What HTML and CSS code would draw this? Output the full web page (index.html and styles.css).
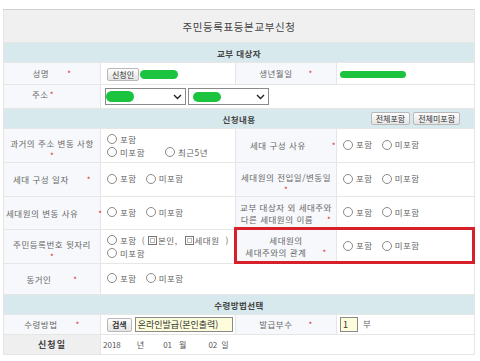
FILE: index.html
```html
<!DOCTYPE html>
<html lang="ko">
<head>
    <meta charset="UTF-8">
    <meta name="viewport" content="width=device-width, initial-scale=1.0">
    <title>주민등록표등본교부신청</title>
    <link rel="stylesheet" href="styles.css">
</head>
<body>
<table class="form">
    <colgroup>
        <col class="c-l1"><col class="c-v1"><col class="c-l2"><col class="c-v2">
    </colgroup>

    <tr class="r-title"><th colspan="4" class="title">주민등록표등본교부신청</th></tr>

    <tr class="r-sec"><th colspan="4" class="sec">교부 대상자</th></tr>
    <tr class="r-name">
        <th class="lbl">성명<span class="req g18">*</span></th>
        <td class="val"><button class="btn">신청인</button><span class="mask mask-name"></span></td>
        <th class="lbl">생년월일<span class="req g16">*</span></th>
        <td class="val"><span class="mask mask-birth"></span></td>
    </tr>
    <tr class="r-addr">
        <th class="lbl lbl-top">주소<span class="req g1">*</span></th>
        <td colspan="3" class="val">
            <div class="sel-row">
                <div class="sel"><span class="mask mask-sel"></span><svg class="chev" width="9" height="6" viewBox="0 0 9 6"><path d="M1 1l3.5 3.5L8 1" fill="none" stroke="#222" stroke-width="1.4"/></svg></div>
                <div class="sel"><span class="mask mask-sel2"></span><svg class="chev" width="9" height="6" viewBox="0 0 9 6"><path d="M1 1l3.5 3.5L8 1" fill="none" stroke="#222" stroke-width="1.4"/></svg></div>
            </div>
        </td>
    </tr>

    <tr class="r-sec">
        <th colspan="4" class="sec">
            <div class="sec-bar">
                <span></span>
                <span>신청내용</span>
                <span class="sec-btns"><button class="btn">전체포함</button><button class="btn">전체미포함</button></span>
            </div>
        </th>
    </tr>
    <tr class="r-a">
        <th class="lbl lbl-2">과거의 주소 변동 사항<br><span class="req">*</span></th>
        <td class="val">
            <div class="line"><span class="opt"><span class="rd"></span>포함</span></div>
            <div class="line"><span class="opt"><span class="rd"></span>미포함</span><span class="opt wide"><span class="rd"></span>최근5년</span></div>
        </td>
        <th class="lbl lbl-shift">세대 구성 사유<span class="req g24">*</span></th>
        <td class="val"><span class="opt"><span class="rd"></span>포함</span><span class="opt"><span class="rd"></span>미포함</span></td>
    </tr>
    <tr class="r-b">
        <th class="lbl">세대 구성 일자<span class="req g18">*</span></th>
        <td class="val"><span class="opt"><span class="rd"></span>포함</span><span class="opt"><span class="rd"></span>미포함</span></td>
        <th class="lbl lbl-2">세대원의 전입일/변동일<br><span class="req">*</span></th>
        <td class="val"><span class="opt"><span class="rd"></span>포함</span><span class="opt"><span class="rd"></span>미포함</span></td>
    </tr>
    <tr class="r-c">
        <th class="lbl lbl-left">세대원의 변동 사유<span class="req g20">*</span></th>
        <td class="val"><span class="opt"><span class="rd"></span>포함</span><span class="opt"><span class="rd"></span>미포함</span></td>
        <th class="lbl">교부 대상자 외 세대주와<br>다른 세대원의 이름<span class="req g14">*</span></th>
        <td class="val"><span class="opt"><span class="rd"></span>포함</span><span class="opt"><span class="rd"></span>미포함</span></td>
    </tr>
    <tr class="r-d">
        <th class="lbl lbl-2">주민등록번호 뒷자리<br><span class="req">*</span></th>
        <td class="val">
            <div class="line"><span class="opt"><span class="rd"></span>포함</span><span class="paren">(</span><span class="cb"></span>본인,<span class="cb gap"></span>세대원<span class="paren close">)</span></div>
            <div class="line"><span class="opt"><span class="rd"></span>미포함</span></div>
        </td>
        <th class="lbl mark">세대원의<br>세대주와의 관계<span class="req g16">*</span></th>
        <td class="val"><span class="opt"><span class="rd"></span>포함</span><span class="opt"><span class="rd"></span>미포함</span></td>
    </tr>
    <tr class="r-e">
        <th class="lbl">동거인<span class="req g22">*</span></th>
        <td colspan="3" class="val"><span class="opt"><span class="rd"></span>포함</span><span class="opt"><span class="rd"></span>미포함</span></td>
    </tr>

    <tr class="r-sec"><th colspan="4" class="sec">수령방법선택</th></tr>
    <tr class="r-f">
        <th class="lbl">수령방법<span class="req g18">*</span></th>
        <td class="val"><button class="btn btn-dark">검색</button><span class="ipt ipt-wide">온라인발급(본인출력)</span></td>
        <th class="lbl">발급부수<span class="req g16">*</span></th>
        <td class="val"><span class="ipt ipt-num">1</span>부</td>
    </tr>
    <tr class="r-g">
        <th class="lbl lbl-strong">신청일</th>
        <td colspan="3" class="val date">
            <span>2018</span><span class="u-y">년</span><span>01</span><span class="u-m">월</span><span>02</span><span class="u-d">일</span>
        </td>
    </tr>
</table>
</body>
</html>
```

FILE: styles.css
```css
body {
    margin: 0;
    padding: 9px 6px 0 3px;
    background: #fff;
    font-family: "Noto Sans CJK KR", "Noto Sans", sans-serif;
    font-size: 8.5px;
    color: #666;
}
.form {
    width: 471px;
    border-collapse: collapse;
    table-layout: fixed;
}
.c-l1 { width: 97px; }
.c-v1 { width: 135px; }
.c-l2 { width: 101px; }
.c-v2 { width: 138px; }
.form th, .form td {
    border: 1px solid #e6e6e6;
    padding: 0;
    font-weight: normal;
    white-space: nowrap;
}

/* row heights */
.r-title { height: 33px; }
.r-sec { height: 20px; }
.r-name { height: 22px; }
.r-addr { height: 24px; }
.r-a, .r-c { height: 33px; }
.r-b, .r-d { height: 34px; }
.r-e { height: 31px; }
.r-f, .r-g { height: 20px; }

.title {
    background: #f0f0f0;
    border-top: 1px solid #cfcfcf !important;
    font-size: 10.5px;
    letter-spacing: 0.6px;
    color: #444;
}
.sec {
    background: #d7e9ec;
    color: #444;
    font-weight: bold !important;
    letter-spacing: 0.4px;
}
.sec-bar {
    display: grid;
    grid-template-columns: 1fr auto 1fr;
    align-items: center;
}
.sec-btns {
    display: flex;
    justify-content: flex-end;
    gap: 3px;
    padding-right: 14px;
}

.lbl {
    background: #f6f8fb;
    text-align: center;
    letter-spacing: 0.5px;
    line-height: 12px;
    color: #666;
}
.lbl-top { vertical-align: top; padding: 3px 18px 0 0 !important; }
.lbl-2 { padding-top: 8px !important; }
.lbl-left { text-align: left; padding-left: 2px !important; }
.lbl-shift { padding-left: 14px !important; }
.lbl-strong {
    background: #efefef;
    font-weight: bold !important;
    color: #444;
    font-size: 9px;
    letter-spacing: 1px;
}
.req { color: #e0242c; font-size: 8px; }
.g1 { margin-left: 1px; }
.g14 { margin-left: 14px; }
.g16 { margin-left: 16px; }
.g18 { margin-left: 18px; }
.g20 { margin-left: 20px; }
.g22 { margin-left: 22px; }
.g24 { margin-left: 26px; }

.mark { position: relative; }
.mark::after {
    content: "";
    position: absolute;
    left: -2px;
    top: -3px;
    width: 241px;
    height: 37px;
    border: 3px solid #d8202a;
    box-sizing: border-box;
    z-index: 1;
}

.val {
    background: #fff;
    text-align: left;
    padding-left: 6px !important;
    color: #666;
    letter-spacing: 0.5px;
    line-height: 13px;
}
.line { display: flex; align-items: center; }
.opt { display: inline-flex; align-items: center; margin-right: 9px; }
.opt.wide { margin-left: 11px; }
.rd {
    display: inline-block;
    width: 8px;
    height: 8px;
    border: 1px solid #8a8a8a;
    border-radius: 50%;
    background: #fff;
    margin-right: 3px;
}
.paren { margin: 0 3px 0 -4px; }
.paren.close { margin: 0 0 0 6px; }
.cb {
    display: inline-block;
    box-sizing: border-box;
    width: 9px;
    height: 9px;
    border: 1px solid #777;
    box-shadow: inset 0 0 0 1px #fff, inset 0 0 0 2px #bbb;
    margin-right: 1px;
    background: #fff;
}
.cb.gap { margin-left: 7px; }

.btn {
    font-family: inherit;
    font-size: 8px;
    color: #333;
    height: 13px;
    padding: 0 4px;
    line-height: 11px;
    border: 1px solid #b9b9b9;
    border-radius: 2px;
    background: linear-gradient(#fdfdfd, #e4e4e4);
    vertical-align: middle;
    letter-spacing: 0;
}
.btn-dark { font-weight: bold; height: 14px; }

.mask {
    display: inline-block;
    background: #1cc33f;
    border-radius: 6px;
    vertical-align: middle;
}
.mask-name { width: 38px; height: 9px; margin-left: 1px; }
.mask-birth { width: 66px; height: 7px; margin-left: -3px; }
.mask-sel { width: 28px; height: 11px; }
.mask-sel2 { width: 28px; height: 10px; margin-left: 4px; }

.sel-row { display: flex; gap: 2px; margin-left: -2px; }
.sel {
    width: 76px;
    height: 15px;
    border: 1px solid #8a8a8a;
    background: #fff;
    display: flex;
    align-items: center;
    justify-content: space-between;
    padding-right: 3px;
}
.chev { display: block; }

.ipt {
    display: inline-block;
    height: 13px;
    line-height: 13px;
    border: 1px solid #8a8a8a;
    background: #fdfddb;
    color: #333;
    vertical-align: middle;
    font-size: 9px;
    padding-left: 2px;
    letter-spacing: 0;
}
.ipt-wide { width: 94px; margin-left: 3px; }
.ipt-num { width: 14px; margin-left: -3px; margin-right: 5px; }

.date {
    color: #555;
    letter-spacing: 0;
    font-size: 8px;
    padding-left: 2px !important;
}
.date .u-y { margin: 0 19px 0 16px; }
.date .u-m { margin: 0 22px 0 7px; }
.date .u-d { margin-left: 4px; }
```
